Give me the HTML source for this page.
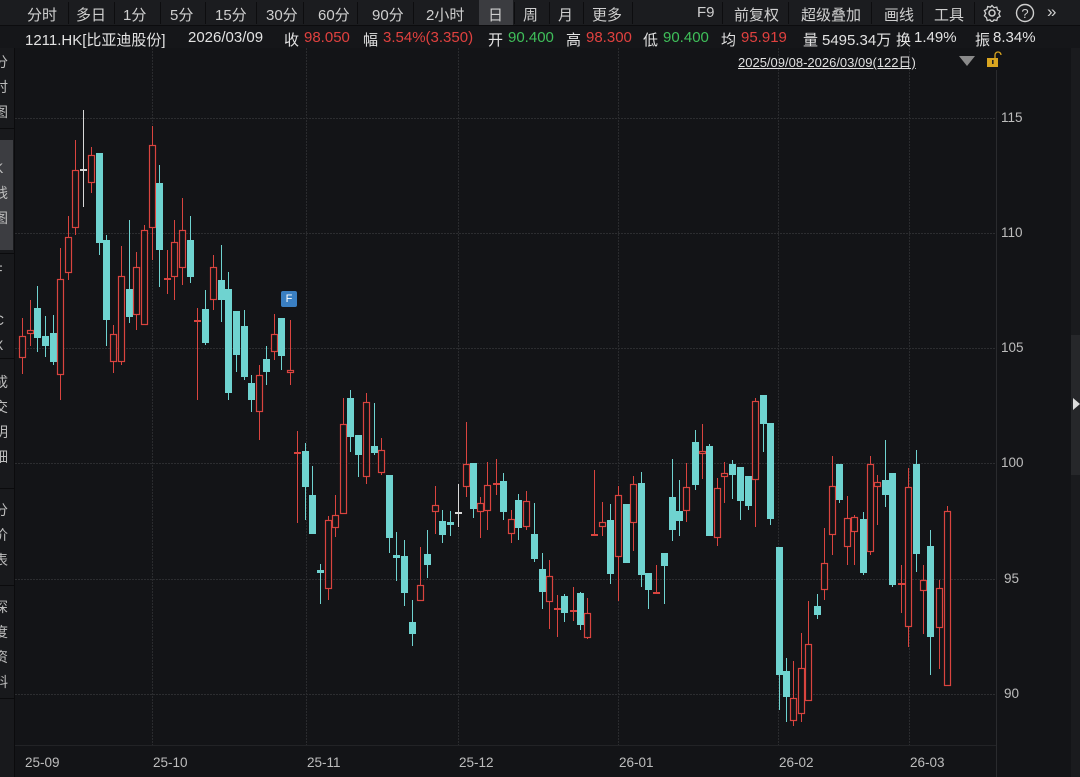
<!DOCTYPE html>
<html><head><meta charset="utf-8">
<style>
*{margin:0;padding:0;box-sizing:border-box}
body{width:1080px;height:777px;background:#131417;overflow:hidden;position:relative;font-family:"Liberation Sans","Noto Sans CJK SC",sans-serif;color:#d6d6d6}
#tb{position:absolute;left:0;top:0;width:1080px;height:26px;background:#1b1c1f;border-bottom:1px solid #0c0c0e}
#tb span{position:absolute;top:4px;font-size:15px;color:#cfcfcf;white-space:nowrap}
.sep{position:absolute;top:2px;width:1px;height:22px;background:#0d0d0f}
#info{position:absolute;left:0;top:26px;width:1080px;height:22px;background:#151619;font-size:15px;white-space:nowrap}
#info span{position:absolute;top:3px}
.r{color:#e0413f}.g{color:#3fbf5a}.w{color:#e2e2e2}
#side{position:absolute;left:0;top:48px;width:15px;height:729px;background:#18191c;border-right:1px solid #0b0b0d;overflow:hidden}
.sv{position:absolute;left:-6px;width:20px;font-size:14px;line-height:25px;color:#bdbdbd;text-align:left;overflow:hidden}
.sl{position:absolute;left:0;width:15px;height:1px;background:#0b0b0d}
#axis span{position:absolute;font-size:13.5px;color:#bdbdbd}
</style></head><body>
<div id="tb">
<span style="left:27px">分时</span><div class="sep" style="left:68px"></div>
<span style="left:76px">多日</span><div class="sep" style="left:114px"></div>
<span style="left:123px">1分</span><div class="sep" style="left:160px"></div>
<span style="left:170px">5分</span><div class="sep" style="left:205px"></div>
<span style="left:215px">15分</span><div class="sep" style="left:256px"></div>
<span style="left:266px">30分</span><div class="sep" style="left:303px"></div>
<span style="left:318px">60分</span><div class="sep" style="left:357px"></div>
<span style="left:372px">90分</span><div class="sep" style="left:413px"></div>
<span style="left:426px">2小时</span>
<div style="position:absolute;left:479px;top:0;width:34px;height:25px;background:#3b3c40"></div>
<span style="left:488px">日</span><div class="sep" style="left:514px"></div>
<span style="left:523px">周</span><div class="sep" style="left:549px"></div>
<span style="left:558px">月</span><div class="sep" style="left:583px"></div>
<span style="left:592px">更多</span><div class="sep" style="left:632px"></div>
<span style="left:697px">F9</span><div class="sep" style="left:722px"></div>
<span style="left:734px">前复权</span><div class="sep" style="left:788px"></div>
<span style="left:801px">超级叠加</span><div class="sep" style="left:871px"></div>
<span style="left:884px">画线</span><div class="sep" style="left:922px"></div>
<span style="left:934px">工具</span><div class="sep" style="left:974px"></div>
<svg style="position:absolute;left:983px;top:4px" width="18" height="18" viewBox="0 0 18 18"><circle cx="9" cy="9" r="3" fill="none" stroke="#cfcfcf" stroke-width="1.5"/><path d="M9 1.5l2 2.2 2.8-.6.7 2.8 2.6 1.3-1.3 2.6 1.3 2.6-2.6 1.3-.7 2.8-2.8-.6-2 2.2-2-2.2-2.8.6-.7-2.8L1.4 11.8l1.3-2.6L1.4 6.6 4 5.3l.7-2.8 2.8.6z" fill="none" stroke="#cfcfcf" stroke-width="1.3"/></svg>
<svg style="position:absolute;left:1015px;top:3px" width="20" height="20" viewBox="0 0 20 20"><circle cx="10" cy="10" r="8.5" fill="none" stroke="#cfcfcf" stroke-width="1.4"/><text x="10" y="15" font-size="13" text-anchor="middle" fill="#cfcfcf" font-family="Liberation Sans">?</text></svg>
<span style="left:1047px;top:2px;font-size:17px">»</span>
</div>
<div id="info">
<span class="w" style="left:25px">1211.HK[比亚迪股份]</span>
<span class="w" style="left:188px">2026/03/09</span>
<span class="w" style="left:284px">收</span><span class="r" style="left:304px">98.050</span>
<span class="w" style="left:363px">幅</span><span class="r" style="left:383px">3.54%(3.350)</span>
<span class="w" style="left:488px">开</span><span class="g" style="left:508px">90.400</span>
<span class="w" style="left:566px">高</span><span class="r" style="left:586px">98.300</span>
<span class="w" style="left:643px">低</span><span class="g" style="left:663px">90.400</span>
<span class="w" style="left:721px">均</span><span class="r" style="left:741px">95.919</span>
<span class="w" style="left:803px">量</span><span class="w" style="left:822px">5495.34万</span>
<span class="w" style="left:896px">换</span><span class="w" style="left:914px">1.49%</span>
<span class="w" style="left:975px">振</span><span class="w" style="left:993px">8.34%</span>
</div>
<div style="position:absolute;left:738px;top:52px;font-size:13px;color:#e0e0e0;text-decoration:underline;white-space:nowrap">2025/09/08-2026/03/09(122日)</div>
<svg style="position:absolute;left:958px;top:55px" width="18" height="12"><path d="M1 1h16l-8 10z" fill="#8a8a8a"/></svg>
<svg style="position:absolute;left:985px;top:51px" width="20" height="18"><path d="M10 7v-3a3 3 0 0 1 6 0" fill="none" stroke="#d9a520" stroke-width="1.3"/><rect x="2" y="7" width="11" height="9" fill="#d9a520"/><rect x="7" y="9" width="1.6" height="4" fill="#222"/></svg>
<div id="side">
<div class="sv" style="top:2px">分<br>时<br>图</div>
<div class="sl" style="top:80px"></div>
<div style="position:absolute;left:0;top:92px;width:13px;height:110px;background:#3c3d41"></div>
<div class="sv" style="top:108px">K<br>线<br>图</div>
<div class="sl" style="top:205px"></div>
<div class="sv" style="top:210px">F<br><br>C<br>X</div>
<div class="sl" style="top:310px"></div>
<div class="sv" style="top:322px">成<br>交<br>明<br>细</div>
<div class="sl" style="top:440px"></div>
<div class="sv" style="top:450px">分<br>价<br>表</div>
<div class="sl" style="top:537px"></div>
<div class="sv" style="top:547px">深<br>度<br>资<br>料</div>
<div class="sl" style="top:650px"></div>
</div>
<div style="position:absolute;left:1071px;top:48px;width:9px;height:729px;background:#1a1b1e"></div>
<div style="position:absolute;left:1071px;top:335px;width:9px;height:140px;background:#26272a"></div>
<svg style="position:absolute;left:1073px;top:398px" width="7" height="12"><path d="M0 0l7 6-7 6z" fill="#ddd"/></svg>
<svg id="ch" style="position:absolute;left:0;top:0" width="1080" height="777"></svg>
<div id="axis">
<span style="left:1001px;top:110px">115</span>
<span style="left:1001px;top:225px">110</span>
<span style="left:1001px;top:340px">105</span>
<span style="left:1001px;top:455px">100</span>
<span style="left:1004px;top:571px">95</span>
<span style="left:1004px;top:686px">90</span>
<span style="left:25px;top:755px">25-09</span>
<span style="left:153px;top:755px">25-10</span>
<span style="left:307px;top:755px">25-11</span>
<span style="left:459px;top:755px">25-12</span>
<span style="left:619px;top:755px">26-01</span>
<span style="left:779px;top:755px">26-02</span>
<span style="left:910px;top:755px">26-03</span>
</div>
<div style="position:absolute;left:281px;top:291px;width:16px;height:16px;background:#3a7fc2;color:#fff;font-size:11px;text-align:center;line-height:16px;border-radius:2px">F</div>
<script>
var d=[
[22,336,358,318,374,'r'],[30,330,334,300,346,'r'],[37,308,338,286,352,'c'],[45,336,346,316,357,'c'],[53,333,362,315,365,'c'],
[60,279,375,248,400,'r'],[68,237,273,216,280,'r'],[75,170,228,140,235,'r'],[83,169,170,110,207,'w'],[91,155,183,147,193,'r'],
[99,153,243,153,255,'c'],[106,240,320,235,346,'c'],[113,334,362,325,373,'r'],[121,276,362,246,365,'r'],[129,289,317,220,323,'c'],
[136,267,315,252,330,'r'],[144,230,325,225,325,'r'],[152,145,228,126,260,'r'],[159,183,250,165,287,'c'],[167,278,280,250,294,'r'],
[174,242,277,220,300,'r'],[182,230,268,198,285,'r'],[190,240,277,216,283,'c'],[197,320,322,308,400,'r'],[205,309,343,290,345,'c'],
[213,267,300,255,310,'r'],[221,280,300,245,322,'c'],[228,289,393,272,400,'c'],[236,311,355,311,372,'c'],[244,326,377,310,380,'c'],
[251,383,400,375,412,'c'],[259,375,412,365,440,'r'],[266,359,372,346,385,'c'],[274,334,352,314,360,'r'],[281,318,356,318,370,'c'],
[290,370,373,320,385,'r'],
[297,452,453,431,523,'r'],[305,451,487,443,520,'c'],[312,495,534,466,534,'c'],[320,570,573,564,604,'c'],[328,520,589,516,600,'r'],
[335,515,528,495,537,'r'],[343,424,514,398,514,'r'],[350,398,437,390,452,'c'],[358,435,455,435,477,'c'],[366,402,477,393,484,'r'],
[374,446,453,403,455,'c'],[381,450,473,438,475,'r'],[389,475,538,475,553,'c'],[396,555,558,532,581,'c'],[404,556,593,540,606,'c'],
[412,622,634,600,646,'c'],[420,585,601,547,601,'r'],[427,554,565,530,578,'c'],[435,505,512,486,534,'r'],[442,521,535,510,543,'c'],
[450,522,525,511,536,'c'],[458,512,513,484,527,'w'],[466,464,487,422,497,'r'],[473,463,509,463,518,'c'],[480,503,512,497,538,'r'],
[487,485,511,462,530,'r'],[496,483,485,459,495,'r'],[503,481,512,473,520,'c'],[511,519,534,510,543,'r'],[518,500,528,494,540,'c'],
[526,501,527,491,530,'r'],[534,534,559,503,562,'c'],[542,569,592,553,609,'c'],[549,576,602,560,629,'r'],[557,608,609,595,637,'r'],
[564,596,613,594,622,'c'],[573,610,611,587,621,'r'],[580,593,625,592,630,'c'],[587,613,638,598,639,'r'],
[594,534,536,470,536,'r'],[602,522,527,502,536,'r'],[610,520,574,504,584,'c'],[618,495,557,486,601,'r'],[626,504,563,504,563,'c'],
[633,484,523,476,551,'r'],[641,483,575,472,587,'c'],[648,573,590,573,609,'c'],[656,592,593,565,594,'r'],[664,553,566,553,604,'c'],
[672,497,530,459,541,'c'],[679,511,521,480,536,'c'],[686,487,511,463,522,'r'],[695,442,485,430,490,'c'],[702,451,454,424,479,'r'],
[709,446,536,444,536,'c'],[717,488,538,478,546,'r'],[724,473,477,462,503,'r'],[732,464,475,460,499,'c'],[740,467,501,467,520,'c'],
[748,476,506,476,510,'c'],[755,401,480,398,527,'r'],[763,395,424,395,452,'c'],[770,423,519,423,525,'c'],[779,547,675,547,710,'c'],
[786,671,697,658,722,'c'],[793,698,721,661,726,'r'],[801,668,714,633,722,'r'],[808,644,701,601,701,'r'],[817,606,615,594,619,'c'],
[824,563,590,528,600,'r'],[832,486,535,456,555,'r'],[839,464,500,464,503,'c'],[847,518,547,496,565,'r'],[854,517,532,515,565,'r'],
[863,519,573,512,575,'c'],[870,464,552,456,555,'r'],[877,482,487,475,525,'r'],[885,480,495,440,507,'c'],[892,473,585,473,587,'c'],
[901,583,584,565,613,'r'],[908,487,627,468,647,'r'],[916,464,554,450,572,'c'],[923,580,591,565,634,'r'],[930,546,637,530,675,'c'],
[939,588,628,580,669,'r'],[947,511,686,506,686,'r']];
var s='';
[118,233,348,463,579,694].forEach(function(y){s+='<line x1="15" x2="996" y1="'+(y+.5)+'" y2="'+(y+.5)+'" stroke="#2c2d30" stroke-dasharray="2,1"/>';});
[152,306,458,618,778,909].forEach(function(x){s+='<line y1="48" y2="745" x1="'+(x+.5)+'" x2="'+(x+.5)+'" stroke="#2a2b2e" stroke-dasharray="2,1"/>';});
s+='<line x1="996.5" x2="996.5" y1="70" y2="777" stroke="#2a2b2e"/>';
s+='<line x1="15" x2="996" y1="745.5" y2="745.5" stroke="#222326"/>';
d.forEach(function(c){var x=c[0],col=c[5]=='r'?'#d9443f':c[5]=='c'?'#6fd3d0':'#d8d8d8';
s+='<line x1="'+(x+.5)+'" x2="'+(x+.5)+'" y1="'+c[3]+'" y2="'+c[4]+'" stroke="'+col+'" stroke-width="1"/>';
var h=Math.max(c[2]-c[1],1);
if(c[5]=='c')s+='<rect x="'+(x-3)+'" y="'+c[1]+'" width="7" height="'+h+'" fill="'+col+'"/>';
else if(h<=2)s+='<rect x="'+(x-3)+'" y="'+c[1]+'" width="7" height="2" fill="'+col+'"/>';
else s+='<rect x="'+(x-2.5)+'" y="'+(c[1]+.5)+'" width="6" height="'+(h-1)+'" fill="#131417" stroke="'+col+'" stroke-width="1.2"/>';});
document.getElementById('ch').innerHTML=s;
</script>
</body></html>
